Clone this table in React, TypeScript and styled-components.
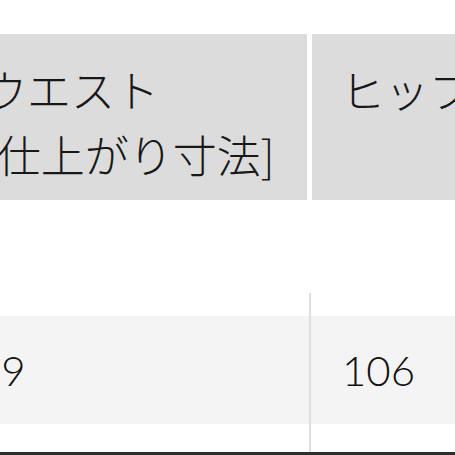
import React from "react";
import styled, { createGlobalStyle } from "styled-components";

const GlobalStyle = createGlobalStyle`
  html, body {
    margin: 0;
    padding: 0;
    background: #ffffff;
    overflow: hidden;
  }
  body {
    width: 455px;
    height: 455px;
    font-family: "Noto Sans CJK JP", "Noto Sans", sans-serif;
    color: #1c1c1c;
  }
`;

const Page = styled.div`
  width: 455px;
  height: 455px;
  overflow: hidden;
  padding-top: 34px;
  box-sizing: border-box;
`;

// table is wider than the viewport and scrolled a bit to the left
const Table = styled.div`
  margin-left: -50px;
  width: 560px;
`;

const HeadRow = styled.div`
  display: grid;
  grid-template-columns: 357px 1fr;
  column-gap: 5px;
  height: 166px;
`;

const HeadCell = styled.div<{ $pad: number }>`
  background: #dcdcdc;
  padding: 23px 0 0 ${(p) => p.$pad}px;
  font-size: 44px;
  font-weight: 300;
  line-height: 65px;
  white-space: nowrap;
  color: #181818;
`;

const Spacer = styled.div<{ $h: number }>`
  height: ${(p) => p.$h}px;
`;

const Row = styled.div<{ $h: number; $bg?: string }>`
  display: grid;
  grid-template-columns: 359px 1fr;
  height: ${(p) => p.$h}px;
  background: ${(p) => p.$bg || "transparent"};
`;

const Cell = styled.div<{ $divider?: boolean }>`
  display: flex;
  align-items: center;
  padding-left: ${(p) => (p.$divider ? "31px" : "27px")};
  border-left: ${(p) => (p.$divider ? "2px solid #dedede" : "none")};
  font-family: "Lato", "Noto Sans", sans-serif;
  font-size: 42px;
  font-weight: 300;
  color: #111;
`;

const BottomLine = styled.div`
  height: 3px;
  background: #2e2e2e;
`;

export default function App() {
  return (
    <>
      <GlobalStyle />
      <Page>
        <Table>
          <HeadRow>
            <HeadCell $pad={33}>
              ウエスト
              <br />
              [仕上がり寸法]
            </HeadCell>
            <HeadCell $pad={29}>ヒップ</HeadCell>
          </HeadRow>
          <Spacer $h={93} />
          <Row $h={23}>
            <Cell />
            <Cell $divider />
          </Row>
          <Row $h={108} $bg="#f4f4f4">
            <Cell>69</Cell>
            <Cell $divider>106</Cell>
          </Row>
          <Row $h={28}>
            <Cell />
            <Cell $divider />
          </Row>
        </Table>
        <BottomLine />
      </Page>
    </>
  );
}
